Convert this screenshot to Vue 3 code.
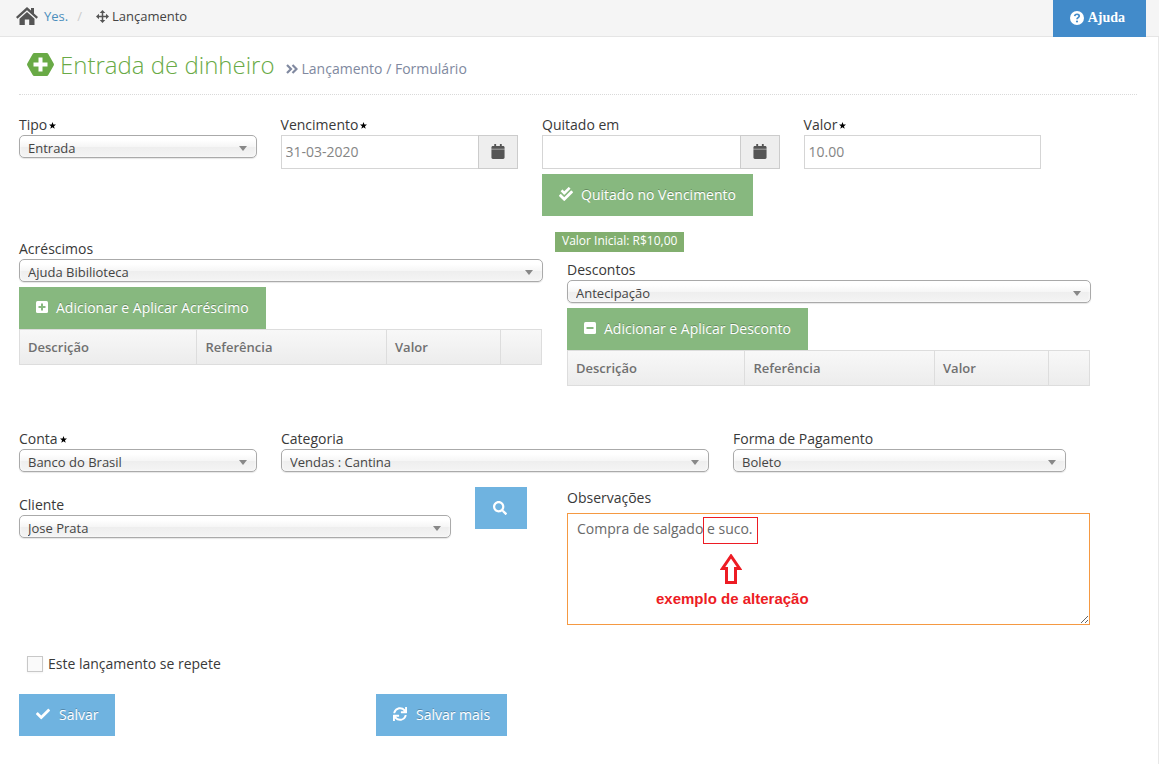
<script setup>
import { ref } from 'vue'

const icons = {
  calendar: { box: '0 0 448 512', d: 'M12 192h424c6.600 0 12 5.400 12 12v260c0 26.500-21.500 48-48 48H48c-26.500 0-48-21.500-48-48V204c0-6.600 5.400-12 12-12zm436-44v-36c0-26.500-21.500-48-48-48h-48V12c0-6.600-5.400-12-12-12h-40c-6.600 0-12 5.400-12 12v52H160V12c0-6.600-5.400-12-12-12h-40c-6.600 0-12 5.400-12 12v52H48C21.500 64 0 85.500 0 112v36c0 6.600 5.400 12 12 12h424c6.600 0 12-5.400 12-12z' },
  check: { box: '0 0 512 512', d: 'M173.898 439.404l-166.400-166.400c-9.997-9.997-9.997-26.206 0-36.204l36.203-36.204c9.997-9.998 26.207-9.998 36.204 0L192 312.690 432.095 72.596c9.997-9.997 26.207-9.997 36.204 0l36.203 36.204c9.997 9.997 9.997 26.206 0 36.204l-294.400 294.401c-9.998 9.997-26.207 9.997-36.204-.001z' },
  double: { box: '0 0 512 512', d: 'M505 174.800l-39.600-39.600c-9.400-9.400-24.600-9.400-33.900 0L192 374.700 80.600 263.200c-9.400-9.400-24.600-9.400-33.900 0L7 302.900c-9.400 9.400-9.400 24.600 0 34L175 505c9.400 9.400 24.600 9.400 33.900 0l296-296.200c9.400-9.500 9.400-24.700.1-34zm-324.300 106c6.200 6.300 16.400 6.300 22.600 0l208-208.200c6.200-6.300 6.200-16.400 0-22.600L366.100 4.700c-6.200-6.300-16.400-6.300-22.600 0L192 156.200l-55.400-55.500c-6.200-6.300-16.400-6.300-22.600 0L68.700 146c-6.200 6.300-6.200 16.400 0 22.600l112 112.200z' },
  search: { box: '0 0 512 512', d: 'M505 442.700L405.300 343c-4.500-4.500-10.600-7-17-7H372c27.600-35.300 44-79.700 44-128C416 93.100 322.900 0 208 0S0 93.100 0 208s93.100 208 208 208c48.300 0 92.700-16.400 128-44v16.300c0 6.400 2.500 12.500 7 17l99.700 99.700c9.400 9.400 24.600 9.400 33.900 0l28.300-28.300c9.400-9.400 9.400-24.600.1-34zM208 336c-70.700 0-128-57.200-128-128 0-70.700 57.200-128 128-128 70.700 0 128 57.200 128 128 0 70.700-57.200 128-128 128z' },
  sync: { box: '0 0 512 512', d: 'M440.650 12.570l4 82.770A247.160 247.160 0 0 0 255.830 8C134.730 8 33.910 94.920 12.290 209.820A12 12 0 0 0 24.090 224h49.050a12 12 0 0 0 11.670-9.260 175.910 175.910 0 0 1 317-56.940l-101.460-4.860a12 12 0 0 0-12.570 12v47.410a12 12 0 0 0 12 12H500a12 12 0 0 0 12-12V12a12 12 0 0 0-12-12h-47.370a12 12 0 0 0-11.980 12.570zM255.830 432a175.610 175.610 0 0 1-146-77.800l101.800 4.870a12 12 0 0 0 12.570-12v-47.400a12 12 0 0 0-12-12H12a12 12 0 0 0-12 12V500a12 12 0 0 0 12 12h47.350a12 12 0 0 0 12-12.600l-4.150-82.570A247.170 247.170 0 0 0 255.830 504c121.110 0 221.930-86.920 243.550-201.820a12 12 0 0 0-11.800-14.180h-49.050a12 12 0 0 0-11.670 9.260A175.860 175.860 0 0 1 255.830 432z' }
}

const due = ref('31-03-2020')
const paid = ref('')
const amount = ref('10.00')
const notes = ref('Compra de salgado e suco.')
const repeats = ref(false)
const headings = ['Descrição', 'Referência', 'Valor']
</script>

<template>
  <div class="page">
    <header class="topbar">
      <nav class="crumbs">
        <svg class="home" viewBox="0 0 22 18"><path d="M11 0 0 10l1.500 1.800L11 3.300l9.500 8.500L22 10l-4-3.600V1h-3v2.600z" /><path d="M11 5 3.500 11.700V18h5.300v-5.500h4.400V18h5.300v-6.300z" /></svg>
        <a href="#">Yes.</a>
        <span class="slash">/</span>
        <svg class="move" viewBox="0 0 13 13"><path d="M6.500 2v9M2 6.500h9" stroke="currentColor" stroke-width="1.500" /><path d="M6.500 0 9.300 3H3.700zM6.500 13 3.700 10h5.600zM0 6.500l3-2.800v5.600zM13 6.500l-3 2.800V3.700z" /></svg>
        <span>Lançamento</span>
      </nav>
      <a class="help" href="#">
        <svg viewBox="0 0 14 14"><circle cx="7" cy="7" r="7" /><path d="M4.700 5.200C5 2.500 9.400 2.700 9.200 5.200 9.100 6.700 7 6.600 7 8.300" fill="none" stroke="#428bca" stroke-width="1.700" /><circle cx="7" cy="10.500" r="1.100" fill="#428bca" /></svg>
        Ajuda
      </a>
    </header>

    <main>
      <div class="heading">
        <svg class="hex" viewBox="0 0 27 23"><path d="M7.200 0h12.600q1 0 1.500.9l5.400 9.600q.5 1 0 2l-5.400 9.600q-.5.9-1.500.9H7.200q-1 0-1.500-.9L.3 12.500q-.5-1 0-2L5.700.9Q6.200 0 7.200 0z" /><path d="M13.500 4.500v14M6.500 11.500h14" stroke="#fff" stroke-width="4" /></svg>
        <h1>Entrada de dinheiro</h1>
        <p><svg viewBox="0 0 12 10"><path d="m1 1 4 4-4 4M6.500 1l4 4-4 4" fill="none" stroke="currentColor" stroke-width="2.200" /></svg>Lançamento / Formulário</p>
      </div>

      <form @submit.prevent>
        <div class="row dates">
          <div>
            <label for="tipo">Tipo<svg class="req" viewBox="0 0 10 10"><path d="m5 0 1.300 3.400 3.700.2-2.900 2.300 1 3.600L5 7.500 1.900 9.500l1-3.600L0 3.600l3.700-.2z" /></svg></label>
            <div class="pick"><select id="tipo"><option>Entrada</option><option>Saída</option></select></div>
          </div>
          <div>
            <label for="venc">Vencimento<svg class="req" viewBox="0 0 10 10"><path d="m5 0 1.300 3.400 3.700.2-2.900 2.300 1 3.600L5 7.500 1.900 9.500l1-3.600L0 3.600l3.700-.2z" /></svg></label>
            <div class="group"><input id="venc" v-model="due" type="text"><button type="button" class="addon" aria-label="Vencimento"><svg :viewBox="icons.calendar.box"><path d="M0 150h448v50H0z" opacity=".6" /><path :d="icons.calendar.d" /></svg></button></div>
          </div>
          <div>
            <label for="quit">Quitado em</label>
            <div class="group"><input id="quit" v-model="paid" type="text"><button type="button" class="addon" aria-label="Quitado em"><svg :viewBox="icons.calendar.box"><path d="M0 150h448v50H0z" opacity=".6" /><path :d="icons.calendar.d" /></svg></button></div>
            <button type="button" class="btn green"><svg :viewBox="icons.double.box"><path :d="icons.double.d" /></svg>Quitado no Vencimento</button>
          </div>
          <div>
            <label for="valor">Valor<svg class="req" viewBox="0 0 10 10"><path d="m5 0 1.300 3.400 3.700.2-2.900 2.300 1 3.600L5 7.500 1.900 9.500l1-3.600L0 3.600l3.700-.2z" /></svg></label>
            <div class="group"><input id="valor" v-model="amount" type="text"></div>
          </div>
        </div>

        <div class="row adjust">
          <div class="extras">
            <label for="acr">Acréscimos</label>
            <div class="pick"><select id="acr"><option>Ajuda Bibilioteca</option></select></div>
            <button type="button" class="btn green"><svg viewBox="0 0 12 12"><rect width="12" height="12" rx="1.500" /><path d="M6 2.500v7M2.500 6h7" stroke="#87b87f" stroke-width="2" /></svg>Adicionar e Aplicar Acréscimo</button>
            <table><thead><tr><th v-for="h in headings" :key="h">{{ h }}</th><td></td></tr></thead></table>
          </div>
          <div>
            <span class="badge">Valor Inicial: R$10,00</span>
            <label for="desc">Descontos</label>
            <div class="pick"><select id="desc"><option>Antecipação</option></select></div>
            <button type="button" class="btn green"><svg viewBox="0 0 12 12"><rect width="12" height="12" rx="1.500" /><path d="M2.500 6h7" stroke="#87b87f" stroke-width="2" /></svg>Adicionar e Aplicar Desconto</button>
            <table><thead><tr><th v-for="h in headings" :key="h">{{ h }}</th><td></td></tr></thead></table>
          </div>
        </div>

        <div class="row account">
          <div>
            <label for="conta">Conta<svg class="req" viewBox="0 0 10 10"><path d="m5 0 1.300 3.400 3.700.2-2.900 2.300 1 3.600L5 7.500 1.900 9.500l1-3.600L0 3.600l3.700-.2z" /></svg></label>
            <div class="pick"><select id="conta"><option>Banco do Brasil</option></select></div>
          </div>
          <div>
            <label for="cat">Categoria</label>
            <div class="pick"><select id="cat"><option>Vendas : Cantina</option></select></div>
          </div>
          <div>
            <label for="forma">Forma de Pagamento</label>
            <div class="pick"><select id="forma"><option>Boleto</option></select></div>
          </div>
        </div>

        <div class="row client">
          <div class="person">
            <label for="cli">Cliente</label>
            <div class="pick"><select id="cli"><option>Jose Prata</option></select></div>
          </div>
          <button type="button" class="btn blue find" aria-label="Buscar cliente"><svg :viewBox="icons.search.box"><path :d="icons.search.d" /></svg></button>
          <div class="notes">
            <label for="obs">Observações</label>
            <div class="area">
              <textarea id="obs" v-model="notes" spellcheck="false"></textarea>
              <span class="mark"></span>
              <svg class="arrow" viewBox="0 0 22 30"><path d="M11 2 2.500 14.500H6.500V28.500h9V14.500h4z" fill="none" stroke="#ed1c24" stroke-width="3" /></svg>
              <span class="hint">exemplo de alteração</span>
            </div>
          </div>
        </div>

        <label class="repeat"><input v-model="repeats" type="checkbox">Este lançamento se repete</label>

        <div class="row actions">
          <div><button type="submit" class="btn blue"><svg :viewBox="icons.check.box"><path :d="icons.check.d" /></svg>Salvar</button></div>
          <div><button type="button" class="btn blue"><svg :viewBox="icons.sync.box"><path :d="icons.sync.d" /></svg>Salvar mais</button></div>
        </div>
      </form>
    </main>
  </div>
</template>

<style>
body { margin: 0; background: #fff; }
</style>

<style scoped>
* { box-sizing: border-box; }
.page { min-height: 100vh; font: 14px/20px "Open Sans", sans-serif; color: #393939; display: flex; flex-direction: column; }
svg { fill: currentColor; flex: none; }
button, input, select, textarea { font-family: inherit; margin: 0; border-radius: 0; }
.topbar { display: flex; justify-content: space-between; height: 37px; padding: 0 13px 0 16px; background: #f5f5f5; border-bottom: 1px solid #e5e5e5; }
.crumbs { display: flex; align-items: center; font-size: 13px; color: #444; height: 32px; }
.home { width: 22px; height: 18px; margin-right: 6px; color: #555; }
.crumbs a { color: #4c8fbd; text-decoration: none; }
.slash { color: #ccc; margin: 0 14px 0 9px; }
.move { width: 13px; height: 13px; margin-right: 3px; color: #555; }
.help { display: flex; align-items: center; gap: 4px; height: 37px; padding: 0 21px 2px 17px; background: #428bca; color: #fff; font: bold 14px/20px "Liberation Serif", serif; text-decoration: none; }
.help svg { width: 14px; height: 14px; }
main { flex: 1; padding: 8px 21px 0 19px; border-right: 1px solid #e8e8e8; }
.heading { display: flex; align-items: center; height: 50px; padding: 0 8px 10px; border-bottom: 1px dotted #d9d9d9; }
.hex { width: 27px; height: 23px; color: #69aa46; margin-right: 6px; }
h1 { margin: 0; font-size: 24px; line-height: 32px; font-weight: 300; color: #69aa46; }
.heading p { display: flex; align-items: center; margin: 0 0 0 11px; padding-top: 8px; font-size: 14px; color: #8089a0; }
.heading p svg { width: 12px; height: 10px; margin-right: 4px; }
form { padding-top: 20px; }
.row { display: grid; column-gap: 24px; align-items: start; }
.dates { grid-template-columns: 238fr 238fr 238fr 238fr 72fr; }
.adjust { grid-template-columns: 524fr 524fr 22fr; margin-top: 16px; }
.account { grid-template-columns: 238fr 428fr 333fr 47fr; margin-top: 43px; }
.client { grid-template-columns: 432fr 68fr 523fr 23fr; margin-top: 14px; }
.actions { grid-template-columns: 333fr 761fr; margin-top: 20px; }
.row > div { min-width: 0; }
label { display: block; line-height: 20px; }
.req { width: 7px; height: 7px; margin: 0 0 1px 2px; color: #000; }
.pick { position: relative; padding-bottom: 1px; }
.pick::after { content: ""; position: absolute; right: 10px; top: 11px; border: 4px solid transparent; border-top: 5px solid #888; border-bottom: 0; pointer-events: none; }
select { display: block; appearance: none; width: 100%; height: 23px; padding: 3px 26px 0 8px; font-size: 13px; color: #444; border: 1px solid #aaa; border-radius: 5px; background: linear-gradient(#fff 20%, #f6f6f6 50%, #eee 52%, #f4f4f4 100%); box-shadow: 0 0 3px #fff inset, 0 1px 1px rgba(0, 0, 0, .1); }
.group { display: flex; }
.group input { flex: 1; min-width: 0; height: 34px; padding: 0 4px 2px; border: 1px solid #d5d5d5; font-size: 14px; color: #858585; background: #fff; }
.addon { width: 40px; height: 34px; margin-left: -1px; padding: 0 0 1px; border: 1px solid #ccc; background: #eee; color: #555; display: grid; place-items: center; }
.addon svg { width: 14px; height: 15px; }
.btn { display: flex; align-items: center; height: 42px; padding: 0 17px 2px; border: 0; color: #fff; font-size: 14px; white-space: nowrap; text-shadow: 0 -1px 0 rgba(0, 0, 0, .25); }
.btn svg { width: 14px; height: 14px; margin-right: 8px; }
.btn.green { background: #87b87f; margin-top: 5px; }
.btn.blue { background: #6fb3e0; }
.actions .btn svg { margin-right: 9px; }
.extras { padding-top: 7px; }
.badge { display: block; width: max-content; height: 20px; line-height: 18px; margin: 0 0 8px -12px; padding: 0 7px; background: #82af6f; color: #fff; font-size: 12px; font-weight: 500; }
.adjust .btn { margin-top: 4px; }
.adjust .btn svg { width: 12px; }
table { width: calc(100% - 1px); table-layout: fixed; border-collapse: collapse; }
th, td { height: 35px; border: 1px solid #ddd; padding: 0 8px; text-align: left; font-size: 13px; font-weight: 600; color: #707070; }
thead tr { background: linear-gradient(#f8f8f8, #ececec); }
th:nth-child(1) { width: 34%; }
th:nth-child(3) { width: 114px; }
td { width: 41px; }
.person { padding-top: 8px; }
.btn.find { width: 52px; justify-content: center; padding: 0; }
.find svg { margin: 0 2px 0 0; }
.notes label { line-height: 22px; margin-bottom: 4px; }
.area { position: relative; }
textarea { display: block; width: 100%; height: 112px; padding: 5px 8px 5px 9px; border: 1px solid #f59942; outline: 0; font-size: 14px; line-height: 20px; color: #696969; resize: vertical; }
.mark { position: absolute; left: 136px; top: 4px; width: 55px; height: 27px; border: 1px solid #ed1c24; pointer-events: none; }
.arrow { position: absolute; left: 153px; top: 41px; width: 22px; height: 30px; pointer-events: none; }
.hint { position: absolute; left: 89px; top: 76px; font: bold 15px/20px "Liberation Sans", sans-serif; color: #ed1c24; white-space: nowrap; pointer-events: none; }
.repeat { display: flex; align-items: center; width: max-content; margin: 29px 0 0 8px; }
.repeat input { appearance: none; width: 16px; height: 16px; margin-right: 5px; border: 1px solid #c8c8c8; background: #fafafa; box-shadow: 0 1px 2px rgba(0, 0, 0, .05); }
.repeat input:checked { background: #6fb3e0; }
</style>
